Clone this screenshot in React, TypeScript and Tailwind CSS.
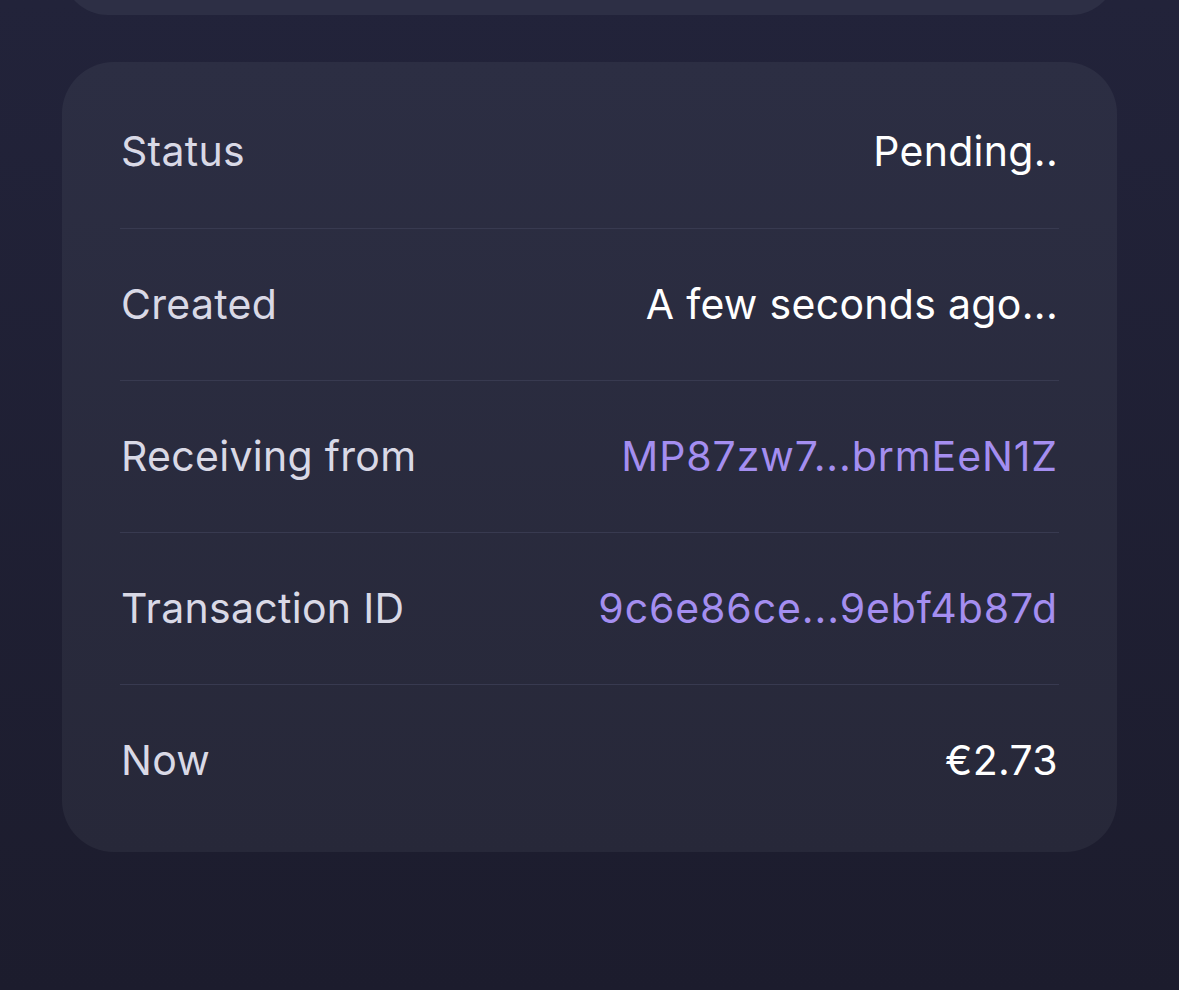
const rows = [
  { label: "Status", value: "Pending..", accent: false },
  { label: "Created", value: "A few seconds ago...", accent: false },
  { label: "Receiving from", value: "MP87zw7...brmEeN1Z", accent: true },
  { label: "Transaction ID", value: "9c6e86ce...9ebf4b87d", accent: true },
  { label: "Now", value: "€2.73", accent: false },
];

export default function App() {
  return (
    <div
      className="h-[990px] w-[1179px] overflow-hidden bg-gradient-to-b from-[#22233a] to-[#1c1c2d]"
      style={{ fontFamily: "Inter, 'Noto Sans', sans-serif" }}
    >
      <div className="mx-[62px] -mt-[60px] h-[75px] rounded-b-[46px] bg-[#2d2f45]" />

      <div className="mx-[62px] mt-[47px] rounded-[52px] bg-gradient-to-b from-[#2c2e43] to-[#272839] px-[58px] pt-[14px] pb-[16px]">
        {rows.map((row, i) => (
          <div
            key={row.label}
            className={`flex h-[152px] items-center justify-between px-[1px] text-[41px] tracking-[0.3px] ${
              i > 0 ? "border-t border-[#383a50]" : ""
            }`}
          >
            <span className="text-[#d9d9e6]">{row.label}</span>
            <span
              className={
                row.accent ? "tracking-[0.9px] text-[#a48ef0]" : "text-white"
              }
            >
              {row.value}
            </span>
          </div>
        ))}
      </div>
    </div>
  );
}
